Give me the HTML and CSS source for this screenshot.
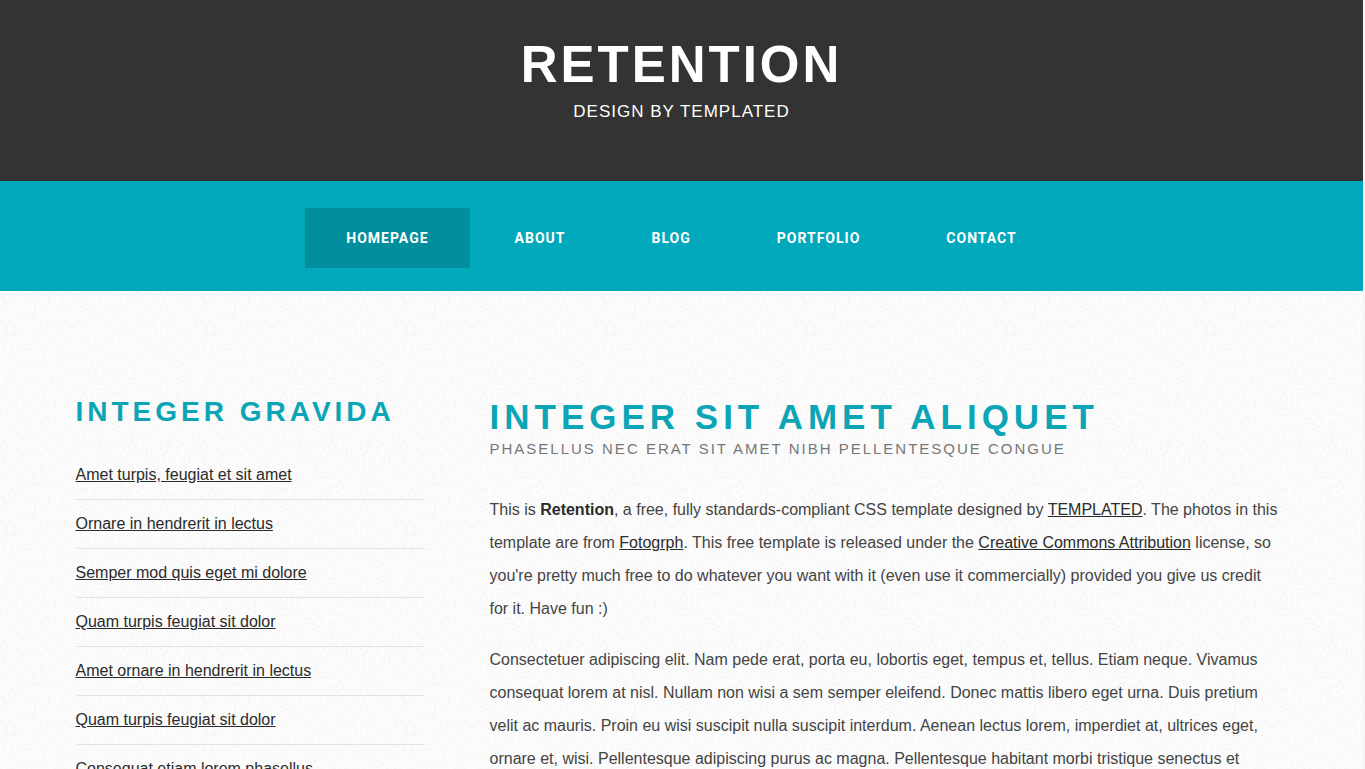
FILE: index.html
```html
<!DOCTYPE html>
<html lang="en">
<head>
<meta charset="utf-8">
<title>Retention</title>
<link rel="stylesheet" href="styles.css">
</head>
<body>
<header class="header">
  <h1 class="logo"><a href="#">RETENTION</a></h1>
  <p class="tagline">DESIGN BY <a href="#">TEMPLATED</a></p>
</header>
<nav class="menu">
  <ul class="menu-list">
    <li><a class="menu-link active" href="#">HOMEPAGE</a></li>
    <li><a class="menu-link" href="#">ABOUT</a></li>
    <li><a class="menu-link" href="#">BLOG</a></li>
    <li><a class="menu-link" href="#">PORTFOLIO</a></li>
    <li><a class="menu-link" href="#">CONTACT</a></li>
  </ul>
</nav>
<div class="page">
  <aside class="sidebar">
    <h2 class="sidebar-title">INTEGER GRAVIDA</h2>
    <ul class="link-list">
      <li><a href="#">Amet turpis, feugiat et sit amet</a></li>
      <li><a href="#">Ornare in hendrerit in lectus</a></li>
      <li><a href="#">Semper mod quis eget mi dolore</a></li>
      <li><a href="#">Quam turpis feugiat sit dolor</a></li>
      <li><a href="#">Amet ornare in hendrerit in lectus</a></li>
      <li><a href="#">Quam turpis feugiat sit dolor</a></li>
      <li><a href="#">Consequat etiam lorem phasellus</a></li>
    </ul>
  </aside>
  <main class="content">
    <h2 class="content-title">INTEGER SIT AMET ALIQUET</h2>
    <p class="byline">PHASELLUS NEC ERAT SIT AMET NIBH PELLENTESQUE CONGUE</p>
    <p class="text">This is <strong>Retention</strong>, a free, fully standards-compliant CSS template designed by <a href="#">TEMPLATED</a>. The photos in this template are from <a href="#">Fotogrph</a>. This free template is released under the <a href="#">Creative Commons Attribution</a> license, so you're pretty much free to do whatever you want with it (even use it commercially) provided you give us credit for it. Have fun :)</p>
    <p class="text">Consectetuer adipiscing elit. Nam pede erat, porta eu, lobortis eget, tempus et, tellus. Etiam neque. Vivamus consequat lorem at nisl. Nullam non wisi a sem semper eleifend. Donec mattis libero eget urna. Duis pretium velit ac mauris. Proin eu wisi suscipit nulla suscipit interdum. Aenean lectus lorem, imperdiet at, ultrices eget, ornare et, wisi. Pellentesque adipiscing purus ac magna. Pellentesque habitant morbi tristique senectus et</p>
  </main>
</div>
</body>
</html>
```
FILE: styles.css
```css
* {
  box-sizing: border-box;
}

html {
  overflow: hidden;
  height: 100%;
}

body {
  margin: 0;
  min-height: 100%;
  border-right: 2px solid #f3f5f6;
  background-color: #fdfdfd;
  background-image: url("data:image/svg+xml,%3Csvg xmlns='http://www.w3.org/2000/svg' width='200' height='200'%3E%3Cfilter id='n'%3E%3CfeTurbulence type='fractalNoise' baseFrequency='.35' numOctaves='3' stitchTiles='stitch'/%3E%3CfeColorMatrix values='0 0 0 0 0 0 0 0 0 0 0 0 0 0 0 .06 0 0 0 -.02'/%3E%3C/filter%3E%3Crect width='200' height='200' filter='url(%23n)'/%3E%3C/svg%3E");
  color: #444;
  font-family: "Liberation Sans", Arial, sans-serif;
  font-size: 16px;
}

h1,
h2,
p,
ul {
  margin: 0;
  padding: 0;
}

ul {
  list-style: none;
}

.header {
  padding: 36px 0 56px;
  background: #333;
  color: #fff;
  text-align: center;
}

.header a {
  color: inherit;
  text-decoration: none;
}

.logo {
  font-size: 51px;
  line-height: 58px;
  letter-spacing: 3px;
}

.tagline {
  padding-top: 5px;
  font-size: 17px;
  line-height: 26px;
  letter-spacing: 1px;
}

.menu {
  padding: 27px 0 23px;
  background: #02a9bc;
}

.menu-list {
  display: flex;
  justify-content: center;
  gap: 4px;
}

.menu-link {
  display: block;
  padding: 0 41px;
  color: #fff;
  font-family: Roboto, "Liberation Sans", sans-serif;
  font-size: 14px;
  font-weight: bold;
  line-height: 60px;
  letter-spacing: 1px;
  text-decoration: none;
}

.menu-link.active {
  background: #028e9d;
}

.page {
  display: grid;
  grid-template-columns: 348px 1fr;
  gap: 66px;
  max-width: 1212px;
  margin: 0 auto;
  padding-top: 102px;
}

.sidebar-title,
.content-title {
  color: #0ba5b6;
  white-space: nowrap;
}

.sidebar-title {
  padding-bottom: 20px;
  font-size: 28px;
  line-height: 38px;
  letter-spacing: 4px;
}

.link-list li {
  padding: 8px 0;
  line-height: 32px;
}

.link-list li + li {
  border-top: 1px solid #e3e3e3;
}

.link-list a,
.text a {
  color: #2b2b2b;
}

.content {
  padding-right: 8px;
}

.content-title {
  padding-top: 2px;
  font-size: 35px;
  line-height: 44px;
  letter-spacing: 5px;
}

.byline {
  padding-bottom: 35px;
  color: #777;
  font-size: 15px;
  line-height: 19px;
  letter-spacing: 2px;
}

.text {
  padding-bottom: 18px;
  line-height: 33px;
}

.text strong {
  color: #2b2b2b;
}
```
